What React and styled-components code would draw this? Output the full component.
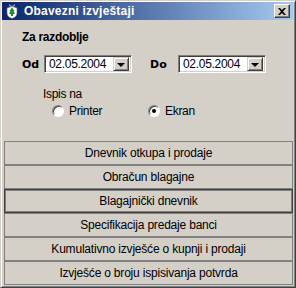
import React, { useState } from 'react'
import styled, { createGlobalStyle } from 'styled-components'

const GlobalStyle = createGlobalStyle`
  html, body {
    margin: 0;
    padding: 0;
    background: #d4d0c8;
  }
  body {
    font-family: "Liberation Sans", Arial, sans-serif;
  }
`

const Window = styled.div`
  width: 296px;
  height: 288px;
  box-sizing: border-box;
  background: #d4d0c8;
  border: 1px solid;
  border-color: #d4d0c8 #404040 #404040 #d4d0c8;
  box-shadow: inset 1px 1px #ffffff, inset -1px -1px #808080;
  padding: 1px 2px 2px 1px;
  display: flex;
  flex-direction: column;
`

const TitleBar = styled.div`
  height: 19px;
  display: flex;
  align-items: center;
  padding: 0 3px 0 2px;
  background: linear-gradient(to right, #0a246a, #a6caf0);
  color: #ffffff;
  font-size: 12px;
  font-weight: bold;
`

const TitleText = styled.span`
  flex: 1;
  margin-left: 4px;
  letter-spacing: 0.2px;
`

const CloseButton = styled.div`
  width: 16px;
  height: 14px;
  box-sizing: border-box;
  background: #d4d0c8;
  border: 1px solid;
  border-color: #ffffff #404040 #404040 #ffffff;
  box-shadow: inset -1px -1px #808080;
  display: flex;
  align-items: center;
  justify-content: center;
`

const Body = styled.div`
  flex: 1;
  display: flex;
  flex-direction: column;
  padding: 0 0 0 2px;
`

const Options = styled.div`
  height: 121px;
  padding: 10px 0 0 18px;
  box-sizing: border-box;
`

const Heading = styled.div`
  font-size: 12px;
  font-weight: bold;
  line-height: 14px;
  letter-spacing: -0.3px;
`

const DateRow = styled.div`
  display: flex;
  align-items: center;
  margin-top: 11px;
  height: 18px;
`

const DateLabel = styled.span`
  font-family: "DejaVu Sans", Verdana, sans-serif;
  font-size: 11px;
  font-weight: bold;
  width: ${p => p.$w}px;
`

const DateField = styled.div`
  width: 88px;
  height: 18px;
  box-sizing: border-box;
  background: #ffffff;
  border: 1px solid;
  border-color: #808080 #ffffff #ffffff #808080;
  box-shadow: inset 1px 1px #404040, inset -1px -1px #d4d0c8;
  display: flex;
  align-items: center;
  padding: 2px 2px 2px 4px;
  margin-right: ${p => p.$mr || 0}px;
`

const DateText = styled.span`
  flex: 1;
  font-size: 12px;
  letter-spacing: -0.3px;
  color: #000;
`

const DropButton = styled.div`
  width: 16px;
  height: 14px;
  box-sizing: border-box;
  background: #d4d0c8;
  border: 1px solid;
  border-color: #d4d0c8 #404040 #404040 #d4d0c8;
  box-shadow: inset 1px 1px #ffffff, inset -1px -1px #808080;
  display: flex;
  align-items: center;
  justify-content: center;
`

const Arrow = styled.div`
  width: 0;
  height: 0;
  border-left: 4px solid transparent;
  border-right: 4px solid transparent;
  border-top: 4px solid #000;
  margin-top: 1px;
`

const PrintGroup = styled.div`
  margin: 14px 0 0 21px;
`

const GroupLabel = styled.div`
  font-size: 12px;
  line-height: 14px;
  letter-spacing: -0.3px;
`

const RadioRow = styled.div`
  display: flex;
  margin-top: 3px;
  margin-left: 9px;
`

const RadioItem = styled.label`
  display: flex;
  align-items: center;
  width: 96px;
  font-size: 12px;
  letter-spacing: -0.3px;
`

const RadioCircle = styled.span`
  width: 12px;
  height: 12px;
  box-sizing: border-box;
  border-radius: 50%;
  background: #ffffff;
  border: 1px solid;
  border-color: #808080 #ffffff #ffffff #808080;
  box-shadow: inset 1px 1px #404040;
  display: flex;
  align-items: center;
  justify-content: center;
  margin-right: 5px;
`

const Dot = styled.span`
  width: 4px;
  height: 4px;
  border-radius: 50%;
  background: #000;
`

const ButtonList = styled.div`
  display: flex;
  flex-direction: column;
`

const ActionButton = styled.button`
  height: 24px;
  margin: 0;
  padding: 0;
  background: #d4d0c8;
  border: 1px solid ${p => (p.$focused ? '#404040' : '#808080')};
  box-shadow: ${p => (p.$focused ? 'inset 1px 1px #808080, inset -1px -1px #808080' : 'none')};
  font-family: "Liberation Sans", Arial, sans-serif;
  font-size: 12px;
  letter-spacing: -0.2px;
  color: #000;
  text-align: center;
`

const buttons = [
  'Dnevnik otkupa i prodaje',
  'Obračun blagajne',
  'Blagajnički dnevnik',
  'Specifikacija predaje banci',
  'Kumulativno izvješće o kupnji i prodaji',
  'Izvješće o broju ispisivanja potvrda'
]

const AppIcon = () => (
  <svg width="16" height="16" viewBox="0 0 16 16">
    <path d="M5 1 L8 3 L11 1 L11 3 L8 4.5 L5 3 Z" fill="#9a9a9a" />
    <path d="M3 5 Q8 2 13 5 L13 10 Q13 14 8 15.5 Q3 14 3 10 Z" fill="#ffffff" stroke="#5a6a80" strokeWidth="0.6" />
    <path d="M8 4.5 L10.5 8 L9.5 8 L11 11 L9 11 L9 13 L7 13 L7 11 L5 11 L6.5 8 L5.5 8 Z" fill="#1f8a2a" />
  </svg>
)

export default function App() {
  const [target, setTarget] = useState('ekran')

  return (
    <>
      <GlobalStyle />
      <Window>
        <TitleBar>
          <AppIcon />
          <TitleText>Obavezni izvještaji</TitleText>
          <CloseButton>
            <svg width="8" height="7" viewBox="0 0 8 7">
              <path d="M0 0 L2 0 L4 2 L6 0 L8 0 L5 3.5 L8 7 L6 7 L4 5 L2 7 L0 7 L3 3.5 Z" fill="#000" />
            </svg>
          </CloseButton>
        </TitleBar>
        <Body>
          <Options>
            <Heading>Za razdoblje</Heading>
            <DateRow>
              <DateLabel $w={22}>Od</DateLabel>
              <DateField $mr={18}>
                <DateText>02.05.2004</DateText>
                <DropButton><Arrow /></DropButton>
              </DateField>
              <DateLabel $w={28}>Do</DateLabel>
              <DateField>
                <DateText>02.05.2004</DateText>
                <DropButton><Arrow /></DropButton>
              </DateField>
            </DateRow>
            <PrintGroup>
              <GroupLabel>Ispis na</GroupLabel>
              <RadioRow>
                <RadioItem onClick={() => setTarget('printer')}>
                  <RadioCircle>{target === 'printer' && <Dot />}</RadioCircle>
                  Printer
                </RadioItem>
                <RadioItem onClick={() => setTarget('ekran')}>
                  <RadioCircle>{target === 'ekran' && <Dot />}</RadioCircle>
                  Ekran
                </RadioItem>
              </RadioRow>
            </PrintGroup>
          </Options>
          <ButtonList>
            {buttons.map((label, i) => (
              <ActionButton key={i} $focused={i === 2}>{label}</ActionButton>
            ))}
          </ButtonList>
        </Body>
      </Window>
    </>
  )
}
